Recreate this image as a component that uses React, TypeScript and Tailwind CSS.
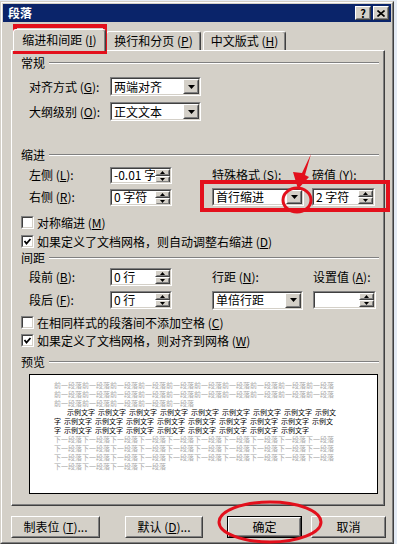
import React from "react";

function Mn({ k }: { k: string }) {
  return (
    <>
      {" ("}
      <span className="underline underline-offset-[1px]">{k}</span>
      {")"}
    </>
  );
}

function Raised({ className = "", children }: { className?: string; children?: React.ReactNode }) {
  return (
    <div className={`flex border border-t-white border-l-white border-b-[#404040] border-r-[#404040] bg-[#d4d0c8] ${className}`}>
      <div className="flex min-h-0 flex-1 items-center justify-center border border-t-[#d4d0c8] border-l-[#d4d0c8] border-b-[#808080] border-r-[#808080]">
        {children}
      </div>
    </div>
  );
}

function Sunken({ className = "", children }: { className?: string; children?: React.ReactNode }) {
  return (
    <div className={`flex border border-t-[#808080] border-l-[#808080] border-b-white border-r-white ${className}`}>
      <div className="flex min-w-0 flex-1 items-center overflow-hidden border border-t-[#404040] border-l-[#404040] border-b-[#d4d0c8] border-r-[#d4d0c8] bg-white">
        {children}
      </div>
    </div>
  );
}

function Down({ w = 7, h = 4 }: { w?: number; h?: number }) {
  return (
    <svg width={w} height={h} viewBox={`0 0 ${w} ${h}`}>
      <polygon points={`0,0 ${w},0 ${w / 2},${h}`} fill="#000" />
    </svg>
  );
}

function Up({ w = 5, h = 3 }: { w?: number; h?: number }) {
  return (
    <svg width={w} height={h} viewBox={`0 0 ${w} ${h}`}>
      <polygon points={`0,${h} ${w},${h} ${w / 2},0`} fill="#000" />
    </svg>
  );
}

function Select({ value, className }: { value: string; className: string }) {
  return (
    <Sunken className={className}>
      <span className="flex-1 whitespace-nowrap pl-[2px]">{value}</span>
      <Raised className="w-[16px] self-stretch">
        <Down />
      </Raised>
    </Sunken>
  );
}

function Spin({ value, className }: { value: string; className: string }) {
  return (
    <Sunken className={className}>
      <span className="min-w-0 flex-1 overflow-hidden whitespace-nowrap pl-[2px]">{value}</span>
      <div className="flex w-[15px] flex-col self-stretch">
        <Raised className="flex-1">
          <Up />
        </Raised>
        <Raised className="flex-1">
          <Down w={5} h={3} />
        </Raised>
      </div>
    </Sunken>
  );
}

function Check({ on, children, className = "" }: { on?: boolean; children: React.ReactNode; className?: string }) {
  return (
    <div className={`flex h-[13px] items-center pl-[9px] ${className}`}>
      <Sunken className="h-[13px] w-[13px]">
        {on && (
          <svg width="9" height="9" viewBox="0 0 9 9">
            <polyline points="1.5,4 3.5,6.5 7.5,2" fill="none" stroke="#000" strokeWidth="1.8" />
          </svg>
        )}
      </Sunken>
      <span className="ml-[3px] whitespace-nowrap">{children}</span>
    </div>
  );
}

function Heading({ text, className = "" }: { text: string; className?: string }) {
  return (
    <div className={`flex h-[14px] items-center pl-[9px] pr-[5px] ${className}`}>
      <span>{text}</span>
      <div className="ml-[4px] h-[2px] flex-1 border-t border-b border-t-[#808080] border-b-white" />
    </div>
  );
}

const GRAY_TOP = ["前一段落".repeat(10), "前一段落".repeat(10), "前一段落".repeat(5)];
const GRAY_BOTTOM = ["下一段落".repeat(10), "下一段落".repeat(10), "下一段落".repeat(10), "下一段落".repeat(4)];
const EIGHT = Array.from({ length: 8 }, () => "示例文字");

function Preview() {
  return (
    <div className="ml-[17px] h-[120px] w-[349px] border border-black bg-white pl-[24px] pt-[6px] text-[7px] leading-[9px]">
      {GRAY_TOP.map((t, i) => (
        <div key={i} className="whitespace-nowrap text-[#a9a9a9]">{t}</div>
      ))}
      <div className="flex whitespace-nowrap pl-[13px] text-black">
        {EIGHT.map((t, i) => (
          <span key={i} className="mr-[3px]">{t}</span>
        ))}
        <span>示例文</span>
      </div>
      <div className="flex whitespace-nowrap text-black">
        <span className="mr-[3px]">字</span>
        {EIGHT.map((t, i) => (
          <span key={i} className="mr-[3px]">{t}</span>
        ))}
        <span>示例文</span>
      </div>
      <div className="flex whitespace-nowrap text-black">
        <span className="mr-[3px]">字</span>
        {EIGHT.map((t, i) => (
          <span key={i} className="mr-[3px]">{t}</span>
        ))}
      </div>
      {GRAY_BOTTOM.map((t, i) => (
        <div key={i} className="whitespace-nowrap text-[#a9a9a9]">{t}</div>
      ))}
    </div>
  );
}

export default function App() {
  return (
    <div className="relative h-[544px] w-[397px] overflow-hidden bg-[#e4ebf5] font-['Noto_Sans_CJK_SC',sans-serif] text-[12px] leading-[14px] text-black">
      <div className="mt-[1px] h-[543px] w-[394px] border border-t-[#d4d0c8] border-l-[#d4d0c8] border-b-[#404040] border-r-[#404040] bg-[#d4d0c8]">
        <div className="h-full border border-t-white border-l-white border-b-[#808080] border-r-[#808080] p-[1px]">
          {/* title bar */}
          <div className="flex h-[18px] items-center bg-[#0a246a] pl-[5px] pr-[2px]">
            <span className="text-[12px] font-bold text-white">段落</span>
            <div className="ml-auto flex gap-[2px]">
              <Raised className="h-[14px] w-[16px]">
                <span className="text-[11px] font-bold leading-none">?</span>
              </Raised>
              <Raised className="h-[14px] w-[16px]">
                <svg width="8" height="7" viewBox="0 0 8 7">
                  <path d="M0.5 0.5 L7.5 6.5 M7.5 0.5 L0.5 6.5" stroke="#000" strokeWidth="1.6" />
                </svg>
              </Raised>
            </div>
          </div>

          <div className="pl-[8px]">
            {/* tabs */}
            <div className="mt-[7px] flex h-[21px] items-end">
              <div className="relative z-10 mb-[-1px] ml-[2px] flex h-[22px] w-[93px] items-center justify-center rounded-t-[3px] border-t border-l border-r border-t-white border-l-white border-r-[#404040] bg-[#d4d0c8] pb-[1px] shadow-[inset_-1px_0_0_#808080]">
                缩进和间距<Mn k="I" />
              </div>
              <div className="flex h-[19px] w-[95px] items-center justify-center rounded-t-[3px] border-t border-l border-r border-t-white border-l-white border-r-[#404040] shadow-[inset_-1px_0_0_#808080]">
                换行和分页<Mn k="P" />
              </div>
              <div className="ml-[2px] flex h-[19px] w-[83px] items-center justify-center rounded-t-[3px] border-t border-l border-r border-t-white border-l-white border-r-[#404040] shadow-[inset_-1px_0_0_#808080]">
                中文版式<Mn k="H" />
              </div>
            </div>

            {/* panel */}
            <div className="h-[456px] w-[374px] border border-t-white border-l-white border-b-[#404040] border-r-[#404040] shadow-[inset_-1px_-1px_0_#808080]">
              <Heading text="常规" className="mt-[5px]" />
              <div className="mt-[7px] flex h-[19px] items-center pl-[17px]">
                <span className="w-[81px] whitespace-nowrap">对齐方式<Mn k="G" />:</span>
                <Select value="两端对齐" className="h-[19px] w-[91px]" />
              </div>
              <div className="mt-[6px] flex h-[19px] items-center pl-[17px]">
                <span className="w-[81px] whitespace-nowrap">大纲级别<Mn k="O" />:</span>
                <Select value="正文文本" className="h-[19px] w-[91px]" />
              </div>

              <Heading text="缩进" className="mt-[27px]" />
              <div className="mt-[4px] flex h-[18px] items-center pl-[17px]">
                <span className="w-[81px] whitespace-nowrap">左侧<Mn k="L" />:</span>
                <Spin value="-0.01 字符" className="h-[17px] w-[62px]" />
                <span className="ml-[40px] w-[100px] whitespace-nowrap">特殊格式<Mn k="S" />:</span>
                <span className="whitespace-nowrap">磅值<Mn k="Y" />:</span>
              </div>
              <div className="mt-[4px] flex h-[18px] items-center pl-[17px]">
                <span className="w-[81px] whitespace-nowrap">右侧<Mn k="R" />:</span>
                <Spin value="0 字符" className="h-[17px] w-[62px]" />
                <Select value="首行缩进" className="ml-[40px] h-[18px] w-[92px]" />
                <Spin value="2 字符" className="ml-[8px] h-[18px] w-[63px]" />
              </div>
              <Check className="mt-[10px]">对称缩进<Mn k="M" /></Check>
              <Check on className="mt-[6px]">如果定义了文档网格，则自动调整右缩进<Mn k="D" /></Check>

              <Heading text="间距" className="mt-[3px]" />
              <div className="mt-[3px] flex h-[18px] items-center pl-[17px]">
                <span className="w-[81px] whitespace-nowrap">段前<Mn k="B" />:</span>
                <Spin value="0 行" className="h-[18px] w-[62px]" />
                <span className="ml-[40px] w-[101px] whitespace-nowrap">行距<Mn k="N" />:</span>
                <span className="whitespace-nowrap">设置值<Mn k="A" />:</span>
              </div>
              <div className="mt-[5px] flex h-[18px] items-center pl-[17px]">
                <span className="w-[81px] whitespace-nowrap">段后<Mn k="F" />:</span>
                <Spin value="0 行" className="h-[18px] w-[62px]" />
                <Select value="单倍行距" className="ml-[40px] h-[19px] w-[91px]" />
                <Spin value="" className="ml-[10px] h-[18px] w-[63px]" />
              </div>
              <Check className="mt-[7px]">在相同样式的段落间不添加空格<Mn k="C" /></Check>
              <Check on className="mt-[5px]">如果定义了文档网格，则对齐到网格<Mn k="W" /></Check>

              <Heading text="预览" className="mt-[8px]" />
              <div className="mt-[5px]">
                <Preview />
              </div>
            </div>

            {/* buttons */}
            <div className="mt-[10px] flex h-[22px]">
              <Raised className="h-[22px] w-[89px]">
                <span className="whitespace-nowrap">制表位<Mn k="T" />...</span>
              </Raised>
              <Raised className="ml-[25px] h-[22px] w-[78px]">
                <span className="whitespace-nowrap">默认<Mn k="D" />...</span>
              </Raised>
              <div className="ml-[24px] flex h-[22px] w-[75px] border border-black">
                <Raised className="flex-1">确定</Raised>
              </div>
              <Raised className="ml-[9px] h-[22px] w-[75px]">取消</Raised>
            </div>
          </div>
        </div>
      </div>

      {/* red annotations */}
      <svg className="pointer-events-none absolute left-0 top-0" width="397" height="544" viewBox="0 0 397 544">
        <rect x="15" y="26" width="90" height="26" fill="none" stroke="#e3101c" strokeWidth="4" />
        <rect x="202" y="182" width="186" height="28" fill="none" stroke="#e3101c" strokeWidth="4" />
        <ellipse cx="297" cy="200" rx="14" ry="12" fill="none" stroke="#e3101c" strokeWidth="3" />
        <polygon points="311,154 305,175 309,177 298,189 293,172 302,173" fill="#e3101c" />
        <ellipse cx="270" cy="522" rx="51" ry="20" fill="none" stroke="#e3101c" strokeWidth="3" />
      </svg>
    </div>
  );
}
